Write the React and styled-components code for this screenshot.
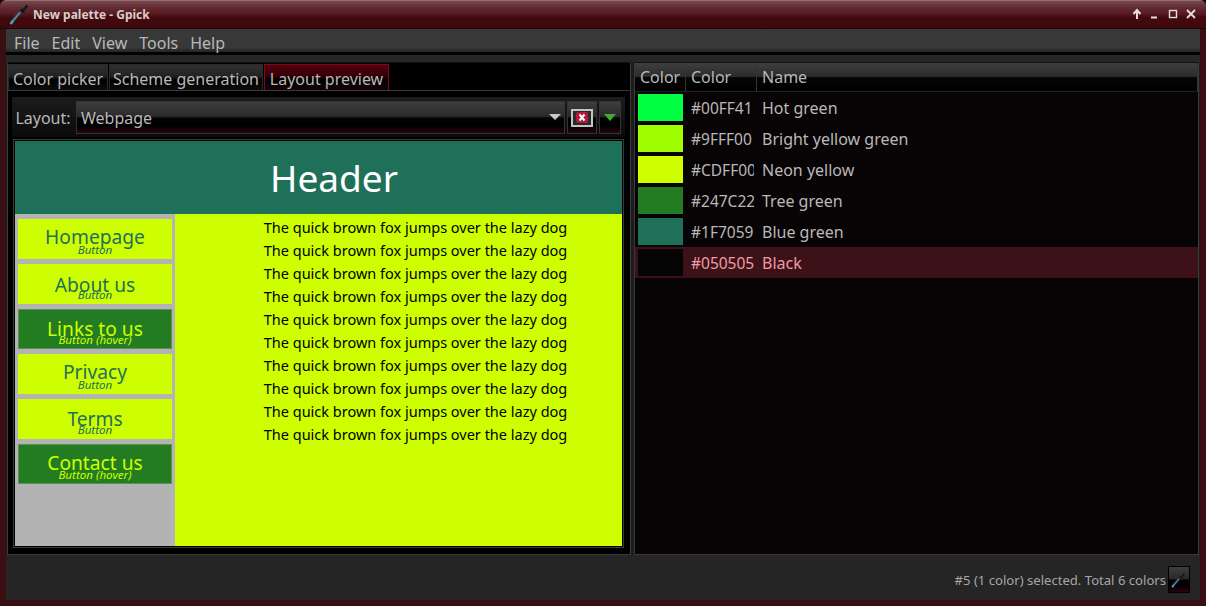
import styled, { createGlobalStyle } from "styled-components";

const GlobalStyle = createGlobalStyle`
  html, body {
    margin: 0;
    padding: 0;
    background: #1a0506;
  }
  * {
    box-sizing: border-box;
  }
`;

const glossy = `linear-gradient(180deg, #3e3e3e 0%, #2a2a2a 46%, #030303 52%, #000 78%, #2c0310 100%)`;

const palette = [
  { swatch: "#00FF41", hex: "#00FF41", name: "Hot green" },
  { swatch: "#9FFF00", hex: "#9FFF00", name: "Bright yellow green" },
  { swatch: "#CDFF00", hex: "#CDFF00", name: "Neon yellow" },
  { swatch: "#247C22", hex: "#247C22", name: "Tree green" },
  { swatch: "#1F7059", hex: "#1F7059", name: "Blue green" },
  { swatch: "#050505", hex: "#050505", name: "Black", selected: true },
];

const buttons = [
  { label: "Homepage", top: 6 },
  { label: "About us", top: 9 },
  { label: "Links to us", top: 7, hover: true },
  { label: "Privacy", top: 6 },
  { label: "Terms", top: 8 },
  { label: "Contact us", top: 6, hover: true },
];

const Dropper = ({ size = 22 }) => (
  <svg width={size} height={size} viewBox="0 0 22 22">
    <path d="M2 20 L12 8" stroke="#31465c" strokeWidth="3.4" fill="none" />
    <path d="M3 19 L11 9.5" stroke="#6f8fb0" strokeWidth="1.2" fill="none" />
    <path d="M1.5 21 L4 18" stroke="#38b6bc" strokeWidth="2.2" fill="none" />
    <path d="M10.5 7.5 L14.5 11 L16 9.5 L15.5 8 L19.5 3.5 L17.5 1.5 L13.5 6 L12 5.8 Z" fill="#191516" stroke="#3a3435" strokeWidth="0.6" />
  </svg>
);

const App = () => {
  return (
    <Window>
      <GlobalStyle />
      <TitleBar>
        <TitleIcon>
          <Dropper />
        </TitleIcon>
        <TitleText>New palette - Gpick</TitleText>
        <WindowButtons>
          <svg width="12" height="12" viewBox="0 0 12 12">
            <path d="M6 11 V3 M2.5 6 L6 2 L9.5 6" fill="none" stroke="#e6dede" strokeWidth="2" />
          </svg>
          <svg width="12" height="12" viewBox="0 0 12 12">
            <path d="M2 9.5 H8" fill="none" stroke="#e6dede" strokeWidth="2" />
          </svg>
          <svg width="12" height="12" viewBox="0 0 12 12">
            <rect x="2.5" y="2.5" width="7" height="7" fill="none" stroke="#e6dede" strokeWidth="1.4" />
          </svg>
          <svg width="12" height="12" viewBox="0 0 12 12">
            <path d="M2 2 L10 10 M10 2 L2 10" fill="none" stroke="#e6dede" strokeWidth="1.8" />
          </svg>
        </WindowButtons>
      </TitleBar>
      <Body>
        <MenuBar>
          <MenuItem>File</MenuItem>
          <MenuItem>Edit</MenuItem>
          <MenuItem>View</MenuItem>
          <MenuItem>Tools</MenuItem>
          <MenuItem>Help</MenuItem>
        </MenuBar>
        <Panes>
          <LeftPane>
            <Tabs>
              <Tab $width={100}>Color picker</Tab>
              <Tab $width={154}>Scheme generation</Tab>
              <Tab $width={125} $active>
                Layout preview
              </Tab>
            </Tabs>
            <TabPage>
              <LayoutRow>
                <LayoutLabel>Layout:</LayoutLabel>
                <Combo>
                  Webpage
                  <ComboArrow />
                </Combo>
                <IconButton $width={30}>
                  <RemoveFrame>
                    <RemoveIcon>
                      <svg width="10" height="9" viewBox="0 0 10 9">
                        <path d="M2.5 1.5 L7.5 7.5 M7.5 1.5 L2.5 7.5" stroke="#fff" strokeWidth="2" />
                      </svg>
                    </RemoveIcon>
                  </RemoveFrame>
                </IconButton>
                <IconButton $width={22}>
                  <GreenArrow />
                </IconButton>
              </LayoutRow>
              <Preview>
                <PageHeader>Header</PageHeader>
                <PageBody>
                  <Sidebar>
                    {buttons.map((b) => (
                      <NavButton key={b.label} $hover={b.hover} $top={b.top}>
                        {b.label}
                        <NavCaption $hover={b.hover}>{b.hover ? "Button (hover)" : "Button"}</NavCaption>
                      </NavButton>
                    ))}
                  </Sidebar>
                  <PageText>
                    {Array.from({ length: 10 }, (_, i) => (
                      <div key={i}>The quick brown fox jumps over the lazy dog</div>
                    ))}
                  </PageText>
                </PageBody>
              </Preview>
            </TabPage>
          </LeftPane>
          <RightPane>
            <ListHeader>
              <HeaderCell $width={51}>Color</HeaderCell>
              <HeaderCell $width={71}>Color</HeaderCell>
              <HeaderCell $width={441}>Name</HeaderCell>
            </ListHeader>
            {palette.map((c) => (
              <Row key={c.name} $selected={c.selected}>
                <Swatch $color={c.swatch} />
                <Hex>{c.hex}</Hex>
                <Name>{c.name}</Name>
              </Row>
            ))}
          </RightPane>
        </Panes>
        <StatusBar>
          #5 (1 color) selected. Total 6 colors
          <StatusButton>
            <Dropper size={16} />
          </StatusButton>
        </StatusBar>
      </Body>
    </Window>
  );
};

export default App;

const Window = styled.div`
  width: 1206px;
  height: 606px;
  display: flex;
  flex-direction: column;
  overflow: hidden;
  font-family: "Noto Sans", sans-serif;
  color: #b8b8b8;
  background: #3a0f12;
  border-radius: 6px 6px 0 0;
`;

const TitleBar = styled.div`
  height: 29px;
  flex: none;
  display: flex;
  align-items: center;
  padding: 0 9px 0 9px;
  background: linear-gradient(180deg, #a58a8e 0, #76464c 5%, #642e34 25%, #541a20 50%, #42090d 62%, #3e0a0e 100%);
  border-bottom: 1px solid #200406;
`;

const TitleIcon = styled.div`
  width: 24px;
  height: 22px;
`;

const TitleText = styled.div`
  font-size: 12px;
  font-weight: 700;
  color: #d8cdcd;
`;

const WindowButtons = styled.div`
  margin-left: auto;
  display: flex;
  gap: 6px;
`;

const Body = styled.div`
  flex: 1;
  margin: 0 6px 6px;
  display: flex;
  flex-direction: column;
  background: #252525;
  min-height: 0;
`;

const MenuBar = styled.div`
  height: 33px;
  flex: none;
  display: flex;
  gap: 12px;
  padding: 4px 0 0 8px;
  font-size: 16px;
  line-height: 20px;
  background: linear-gradient(180deg, #383838 0 56%, #242424 70%, #000 70%, #000 80%, #262626 80%);
`;

const MenuItem = styled.span`
  color: #b8b8b8;
`;

const Panes = styled.div`
  flex: none;
  height: 493px;
  display: flex;
  gap: 3px;
  padding-left: 1px;
  background: #1c1c1c;
`;

const LeftPane = styled.div`
  width: 624px;
  display: flex;
  flex-direction: column;
  background: #000;
  border: 1px solid #3a3a3a;
  border-top: 1px solid #111;
`;

const Tabs = styled.div`
  height: 28px;
  flex: none;
  display: flex;
  gap: 1px;
  padding-top: 1px;
  border-bottom: 1px solid #3a3a3a;
`;

const Tab = styled.div`
  width: ${(p) => p.$width}px;
  text-align: center;
  font-size: 16px;
  line-height: 28px;
  color: #b8b8b8;
  border: 1px solid ${(p) => (p.$active ? "#7a0a1c" : "#2a2a2a")};
  border-bottom: none;
  background: ${(p) =>
    p.$active
      ? "linear-gradient(180deg, #50000c 0%, #3a0008 40%, #000 60%, #160206 100%)"
      : "linear-gradient(180deg, #303030 0%, #222 45%, #000 60%, #0c0c0c 100%)"};
`;

const TabPage = styled.div`
  flex: 1;
  min-height: 0;
  display: flex;
  flex-direction: column;
  padding: 6px 5px 6px 4px;
`;

const LayoutRow = styled.div`
  height: 40px;
  flex: none;
  display: flex;
  align-items: stretch;
  gap: 2px;
  padding: 4px 4px 3px 0;
  background: linear-gradient(180deg, #1c1c1c 0%, #0a0a0a 100%);
`;

const LayoutLabel = styled.div`
  width: 62px;
  flex: none;
  text-align: center;
  font-size: 16px;
  line-height: 34px;
  color: #b8b8b8;
`;

const Combo = styled.div`
  flex: 1;
  position: relative;
  padding-left: 4px;
  font-size: 16px;
  line-height: 33px;
  color: #b8b8b8;
  border: 1px solid #333;
  background: ${glossy};
`;

const ComboArrow = styled.span`
  position: absolute;
  right: 3px;
  top: 12px;
  width: 0;
  height: 0;
  border-left: 6px solid transparent;
  border-right: 6px solid transparent;
  border-top: 6px solid #c8c8c8;
`;

const IconButton = styled.div`
  width: ${(p) => p.$width}px;
  flex: none;
  display: flex;
  align-items: center;
  justify-content: center;
  border: 1px solid #333;
  background: ${glossy};
`;

const RemoveFrame = styled.div`
  width: 22px;
  height: 18px;
  display: flex;
  align-items: center;
  justify-content: center;
  background: #2a2a2a;
  border: 2px solid #c4c4c4;
`;

const RemoveIcon = styled.div`
  width: 12px;
  height: 11px;
  display: flex;
  align-items: center;
  justify-content: center;
  background: #b01c38;
  border-radius: 2px;
`;

const GreenArrow = styled.span`
  width: 0;
  height: 0;
  border-left: 6px solid transparent;
  border-right: 6px solid transparent;
  border-top: 7px solid #46a832;
`;

const Preview = styled.div`
  flex: 1;
  min-height: 0;
  margin: 2px 1px 0 1px;
  display: flex;
  flex-direction: column;
  border: 1px solid #3a3a3a;
  padding: 1px;
  background: #000;
`;

const PageHeader = styled.div`
  height: 73px;
  flex: none;
  padding-left: 31px;
  text-align: center;
  font-size: 37px;
  line-height: 74px;
  color: #fff;
  background: #1f7059;
`;

const PageBody = styled.div`
  flex: 1;
  min-height: 0;
  display: flex;
`;

const Sidebar = styled.div`
  width: 160px;
  flex: none;
  display: flex;
  flex-direction: column;
  gap: 5px;
  padding: 5px 3px;
  background: #b3b3b3;
`;

const NavButton = styled.div`
  position: relative;
  height: 40px;
  padding-top: ${(p) => p.$top}px;
  text-align: center;
  font-size: 19.2px;
  line-height: 24px;
  color: ${(p) => (p.$hover ? "#cdff00" : "#1f7059")};
  background: ${(p) => (p.$hover ? "#247c22" : "#cdff00")};
  border: ${(p) => (p.$hover ? "1px solid #5c8f5a" : "none")};
`;

const NavCaption = styled.span`
  position: absolute;
  left: 0;
  right: 0;
  top: ${(p) => (p.$hover ? 23 : 24)}px;
  font-size: 11.6px;
  line-height: 14px;
  font-style: italic;
`;

const PageText = styled.div`
  flex: 1;
  padding: 2px 0 0 34px;
  text-align: center;
  font-size: 14.5px;
  line-height: 23px;
  color: #000;
  background: #cdff00;
`;

const RightPane = styled.div`
  flex: 1;
  margin-right: 1px;
  background: #080405;
  border: 1px solid #3a3a3a;
  border-top: 1px solid #111;
  font-size: 16px;
`;

const ListHeader = styled.div`
  height: 29px;
  display: flex;
  border-bottom: 1px solid #222;
  background: #000;
`;

const HeaderCell = styled.div`
  width: ${(p) => p.$width}px;
  padding-left: 5px;
  line-height: 28px;
  color: #b8b8b8;
  border-right: 1px solid #333;
  background: linear-gradient(180deg, #3e3e3e 0%, #2c2c2c 48%, #060606 52%, #000 100%);
`;

const Row = styled.div`
  height: 31px;
  display: flex;
  align-items: center;
  padding-left: 3px;
  color: ${(p) => (p.$selected ? "#f09aa4" : "#b8b8b8")};
  background: ${(p) => (p.$selected ? "#3c1218" : "transparent")};
`;

const Swatch = styled.div`
  width: 45px;
  height: 27px;
  flex: none;
  background: ${(p) => p.$color};
`;

const Hex = styled.span`
  width: 63px;
  flex: none;
  margin: 0 2px 0 8px;
  overflow: hidden;
  white-space: nowrap;
  font-size: 15.5px;
`;

const Name = styled.span`
  margin-left: 6px;
`;

const StatusBar = styled.div`
  flex: 1;
  display: flex;
  align-items: center;
  justify-content: flex-end;
  gap: 2px;
  padding: 4px 10px 0 0;
  font-size: 13.1px;
  color: #a6a6a6;
  background: #252525;
`;

const StatusButton = styled.div`
  width: 22px;
  height: 27px;
  display: flex;
  align-items: center;
  justify-content: center;
  border: 1px solid #000;
  background: ${glossy};
`;
